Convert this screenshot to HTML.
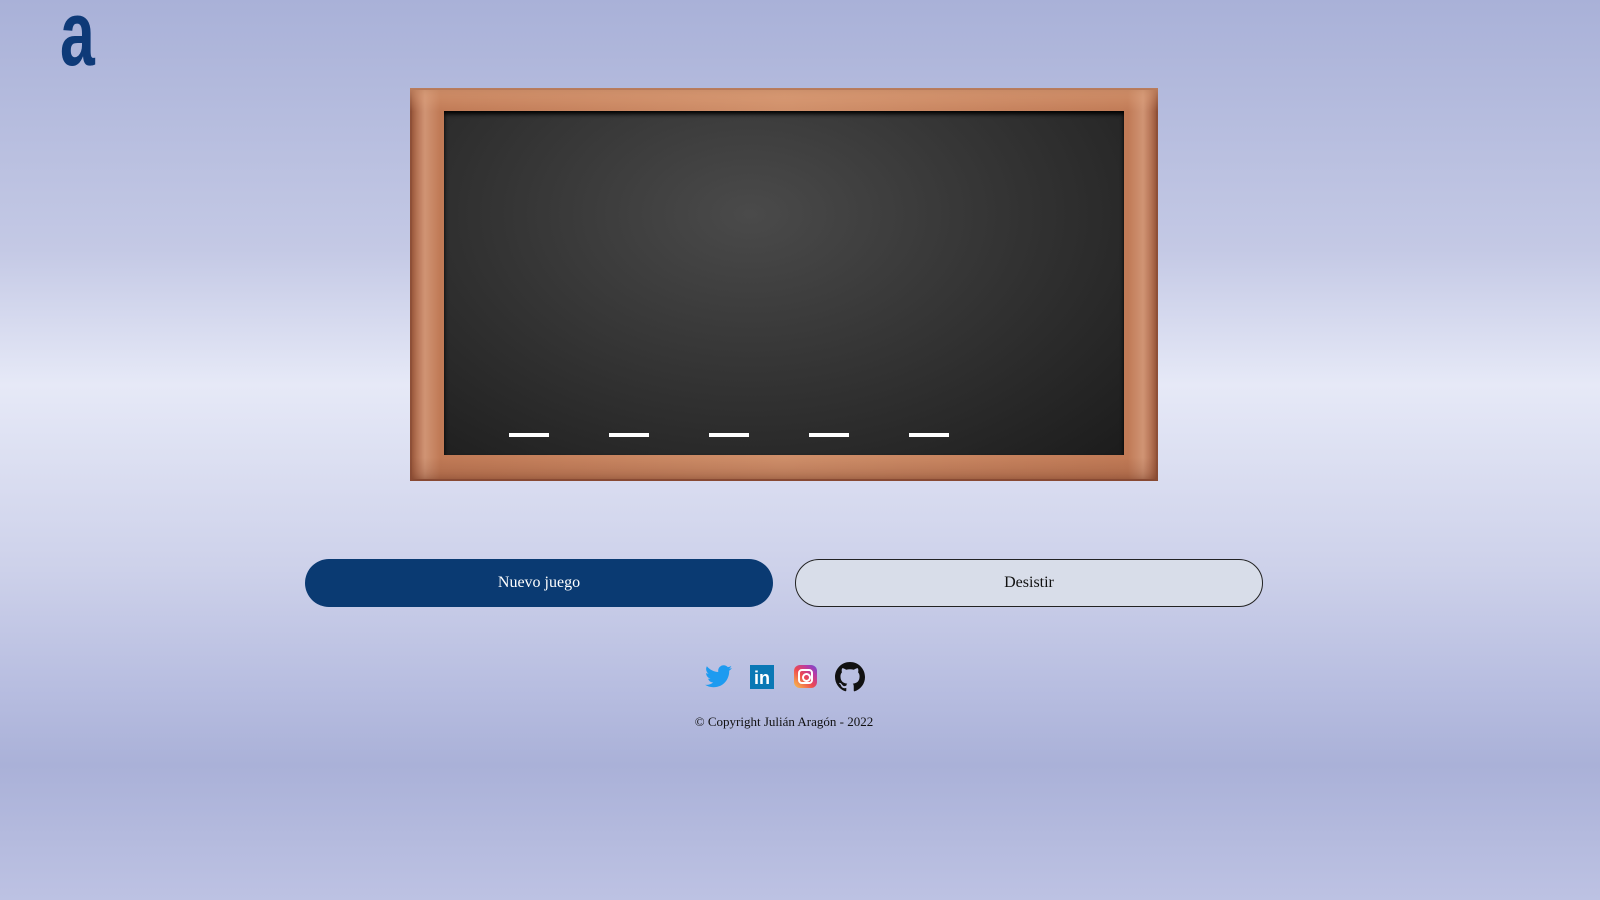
<!DOCTYPE html>
<html><head><meta charset="utf-8"><style>
html,body{margin:0;padding:0;width:1600px;height:900px;overflow:hidden}
body{background:linear-gradient(180deg,#a9b1d8 0px,#c4c9e5 250px,#e6e9f7 385px,#cdd1ea 570px,#b7bde0 690px,#aab1d8 765px,#bdc2e3 900px);font-family:"Liberation Serif",serif;position:relative}
.logo{position:absolute;left:60px;top:-12px;font-family:"Liberation Sans",sans-serif;font-weight:bold;font-size:92px;color:#0e3a78;line-height:1;transform:scaleX(0.68);transform-origin:left top}
.frame{position:absolute;left:410px;top:88px;width:748px;height:393px;background:linear-gradient(90deg,#a55e40,#d09474 2%,#c07a56 4%,#cf8f6a 50%,#c07a56 96%,#d09474 98%,#a55e40);box-shadow:inset 0 0 0 2px #8e5038,inset 0 0 10px rgba(90,40,20,.6)}
.frame:before{content:"";position:absolute;left:0;top:0;right:0;height:100%;background:linear-gradient(180deg,rgba(230,170,130,.5),rgba(0,0,0,0) 6%,rgba(0,0,0,0) 94%,rgba(120,60,40,.3))}
.board{position:absolute;left:34px;top:23px;width:680px;height:344px;background:radial-gradient(ellipse at 45% 30%,#4a4a4a,#333 50%,#1c1c1c 100%);box-shadow:inset 0 3px 4px #000}
.dash{position:absolute;top:322px;width:40px;height:4px;background:#fff}
.btn{position:absolute;top:559px;width:468px;height:48px;border-radius:24px;font-size:16px;display:flex;align-items:center;justify-content:center;box-sizing:border-box}
.b1{left:305px;background:#0a3a72;color:#fff}
.b2{left:795px;background:#d8dde9;color:#111;border:1px solid #222}
.copy{position:absolute;top:714px;left:0;width:1568px;text-align:center;font-size:13px;color:#111}
</style></head><body>
<div class="logo">a</div>
<div class="frame"><div class="board">
<div class="dash" style="left:65px"></div><div class="dash" style="left:165px"></div><div class="dash" style="left:265px"></div><div class="dash" style="left:365px"></div><div class="dash" style="left:465px"></div>
</div></div>
<div class="btn b1">Nuevo juego</div>
<div class="btn b2">Desistir</div>
<svg style="position:absolute;left:705px;top:665px" width="27" height="23" viewBox="0 0 24 20"><path fill="#1d9bf0" d="M24 2.4c-.9.4-1.8.6-2.8.8 1-.6 1.8-1.6 2.2-2.7-1 .6-2 1-3.1 1.2C19.3.6 18 0 16.6 0c-2.7 0-4.9 2.2-4.9 4.9 0 .4 0 .8.1 1.1C7.7 5.8 4.1 3.9 1.7.9c-.4.7-.7 1.6-.7 2.5 0 1.7.9 3.2 2.2 4.1-.8 0-1.6-.2-2.2-.6v.1c0 2.4 1.7 4.4 3.9 4.8-.4.1-.8.2-1.3.2-.3 0-.6 0-.9-.1.6 2 2.4 3.4 4.6 3.4-1.7 1.3-3.8 2.1-6.1 2.1-.4 0-.8 0-1.2-.1 2.2 1.4 4.8 2.2 7.5 2.2 9.1 0 14-7.5 14-14v-.6c1-.7 1.8-1.6 2.5-2.5z"/></svg>
<div style="position:absolute;left:750px;top:665px;width:24px;height:24px;background:#0a78b5;color:#fff;font:bold 18px 'Liberation Sans',sans-serif;text-align:center;line-height:26px">in</div>
<div style="position:absolute;left:794px;top:665px;width:23px;height:23px;border-radius:6px;background:linear-gradient(45deg,#f9c34b,#ee4a4f 45%,#b83aa6 75%,#6a4fd4)"><div style="position:absolute;left:4px;top:4px;width:11px;height:11px;border:2px solid #fff;border-radius:4px"></div><div style="position:absolute;left:8px;top:8px;width:5px;height:5px;border:2px solid #fff;border-radius:50%"></div></div>
<svg style="position:absolute;left:835px;top:662px" width="30" height="30" viewBox="0 0 16 16"><path fill="#111" d="M8 0C3.58 0 0 3.58 0 8c0 3.54 2.29 6.53 5.47 7.59.4.07.55-.17.55-.38v-1.33c-2.23.48-2.7-1.08-2.7-1.08-.36-.92-.89-1.17-.89-1.17-.73-.5.05-.49.05-.49.8.06 1.23.83 1.23.83.71 1.23 1.87.87 2.330.66.07-.52.28-.87.51-1.07-1.78-.2-3.64-.89-3.64-3.95 0-.87.31-1.59.82-2.15-.08-.2-.36-1.02.08-2.12 0 0 .67-.21 2.2.82.64-.18 1.32-.27 2-.27.68 0 1.36.09 2 .27 1.53-1.04 2.2-.82 2.2-.82.44 1.1.16 1.92.08 2.12.51.56.82 1.27.82 2.15 0 3.07-1.87 3.75-3.65 3.95.29.25.54.73.54 1.48v2.2c0 .21.15.46.55.38A8.01 8.01 0 0016 8c0-4.42-3.58-8-8-8z"/></svg>
<div class="copy">© Copyright Julián Aragón - 2022</div>
</body></html>
